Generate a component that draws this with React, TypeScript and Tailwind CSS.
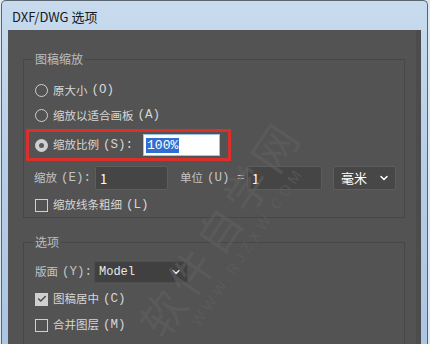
import { ChevronDown, Check } from "lucide-react";

const cjk = { fontFamily: '"Noto Sans CJK SC", "Noto Sans", sans-serif' };
const mono = { fontFamily: '"Liberation Mono", "DejaVu Sans Mono", monospace' };

function Radio({ checked }: { checked?: boolean }) {
  return (
    <span
      className={
        "flex h-[13px] w-[13px] shrink-0 items-center justify-center rounded-full border-[1.5px] border-[#cfcfcf] " +
        (checked ? "bg-[#cfcfcf]" : "")
      }
    >
      {checked && <span className="h-[5px] w-[5px] rounded-full bg-[#5a5a5a]" />}
    </span>
  );
}

function Box({ checked }: { checked?: boolean }) {
  return (
    <span
      className={
        "flex h-[13px] w-[13px] shrink-0 items-center justify-center border-[1.5px] border-[#cfcfcf] " +
        (checked ? "bg-[#cfcfcf]" : "")
      }
    >
      {checked && <Check size={10} strokeWidth={3.5} className="text-[#4a4a4a]" />}
    </span>
  );
}

// chinese label with the shortcut in brackets, e.g. 原大小 (O)
function Label({ text, hot, tail }: { text: string; hot: string; tail?: string }) {
  return (
    <span className="flex items-center whitespace-nowrap">
      <span>{text}</span>
      <span className="ml-[4px] text-[12.5px]" style={mono}>
        ({hot}){tail}
      </span>
    </span>
  );
}

export default function App() {
  return (
    <div className="h-[344px] w-[430px] overflow-hidden bg-[#dfe7ef]" style={cjk}>
      {/* window frame */}
      <div className="relative ml-[1px] mr-[2px] flex h-full flex-col rounded-t-[5px] border border-b-0 border-[#5a6470] bg-gradient-to-b from-[#c8dbee] via-[#b6cde7] to-[#abc5e2] px-[6px]">
        <div className="flex h-[29px] shrink-0 items-center pl-[4px] pt-[2px] text-[13px] text-[#1a1a1a]">
          DXF/DWG 选项
        </div>

        <div className="relative flex-1 border-r-[5px] border-[#4c4c4c] bg-[#535353] pl-[15px] pr-[11px] pt-[22px] text-[11.5px] text-[#d6d6d6]">
          {/* 图稿缩放 */}
          <fieldset className="h-[166px] border border-[#474747]">
            <legend className="ml-[9px] px-[2px] text-[12px] leading-[14px] text-[#bdbdbd]">图稿缩放</legend>
            <div className="flex flex-col pl-[11px] pt-[12px]">
              <label className="flex h-[25px] items-center gap-[5px]">
                <Radio />
                <Label text="原大小" hot="O" />
              </label>
              <label className="flex h-[25px] items-center gap-[5px]">
                <Radio />
                <Label text="缩放以适合画板" hot="A" />
              </label>
              <div className="relative -ml-[9px] mt-[1px] flex h-[32px] w-[205px] items-center gap-[5px] border-[3px] border-[#d9302c] pl-[6px]">
                <Radio checked />
                <Label text="缩放比例" hot="S" tail=":" />
                <span className="ml-[5px] flex h-[22px] w-[77px] items-center border border-[#9fc3e6] bg-white pl-[2px]">
                  <span className="bg-[#2f6fd0] px-[1px] text-[13px] leading-[15px] text-white" style={mono}>
                    100%
                  </span>
                </span>
              </div>
              <div className="-ml-[1px] mt-[5px] flex h-[24px] items-center text-[#c4c4c4]">
                <span className="w-[61px] shrink-0">
                  <Label text="缩放" hot="E" tail=":" />
                </span>
                <span className="flex h-[24px] w-[73px] items-start rounded-[2px] border border-[#5d5d5d] bg-[#454545] pl-[4px] pt-[2px] text-[13px] text-white">
                  1
                </span>
                <span className="ml-[12px] w-[67px] shrink-0">
                  <Label text="单位" hot="U" tail=" =" />
                </span>
                <span className="flex h-[24px] w-[75px] items-start rounded-[2px] border border-[#5d5d5d] bg-[#454545] pl-[4px] pt-[2px] text-[13px] text-white">
                  1
                </span>
                <span className="ml-[11px] flex h-[24px] w-[63px] items-center justify-between rounded-[2px] border border-[#5d5d5d] bg-[#474747] pl-[7px] pr-[5px] text-[13px] text-white">
                  毫米
                  <ChevronDown size={12} strokeWidth={3} />
                </span>
              </div>
              <label className="mt-[3px] flex h-[24px] items-center gap-[5px]">
                <Box />
                <Label text="缩放线条粗细" hot="L" />
              </label>
            </div>
          </fieldset>

          {/* 选项 */}
          <fieldset className="mt-[17px] h-[120px] border border-[#474747]">
            <legend className="ml-[9px] px-[2px] text-[12px] leading-[14px] text-[#bdbdbd]">选项</legend>
            <div className="flex flex-col pl-[11px] pt-[12px]">
              <div className="flex h-[22px] items-center text-[#c4c4c4]">
                <span className="w-[59px] shrink-0">
                  <Label text="版面" hot="Y" tail=":" />
                </span>
                <span className="flex h-[22px] w-[94px] items-center justify-between rounded-[2px] border border-[#4f4f4f] bg-[#404040] pl-[4px] pr-[5px] text-[12px] text-[#e8e8e8]">
                  <span style={mono}>Model</span>
                  <ChevronDown size={12} strokeWidth={3} />
                </span>
              </div>
              <label className="mt-[3px] flex h-[26px] items-center gap-[5px]">
                <Box checked />
                <Label text="图稿居中" hot="C" />
              </label>
              <label className="flex h-[26px] items-center gap-[5px]">
                <Box />
                <Label text="合并图层" hot="M" />
              </label>
            </div>
          </fieldset>

          {/* watermark */}
          <div className="pointer-events-none absolute left-[95px] top-[168px] flex -rotate-[56deg] flex-col items-center text-[#5f5f5f] opacity-60">
            <span className="text-[44px] leading-[48px] tracking-[6px]">软件自学网</span>
            <span className="text-[15px] tracking-[4px]" style={{ fontFamily: '"Liberation Sans", sans-serif' }}>
              WWW.RJZXW.COM
            </span>
          </div>
        </div>
      </div>
    </div>
  );
}
